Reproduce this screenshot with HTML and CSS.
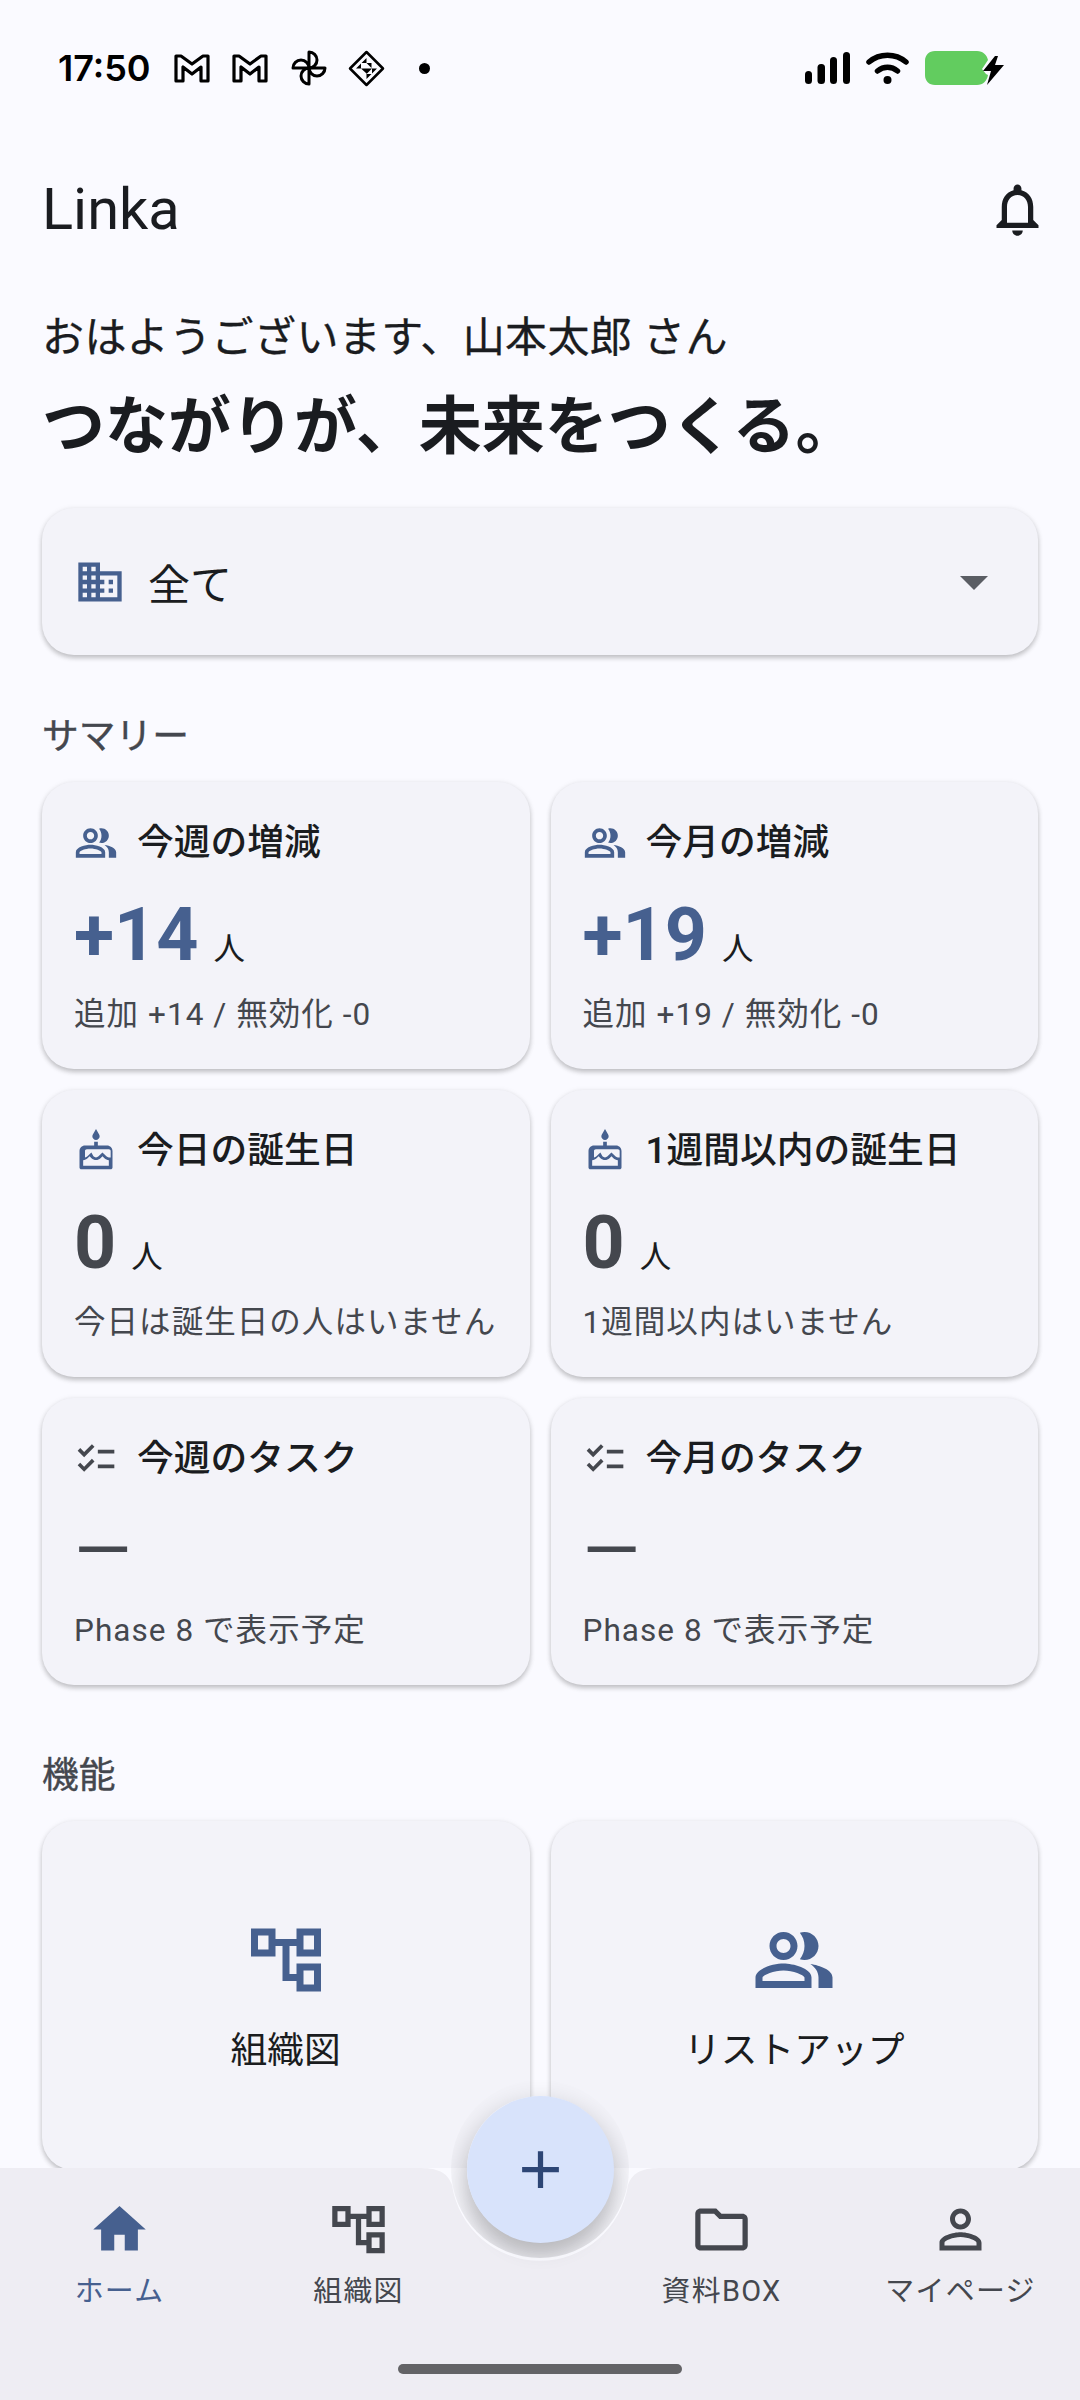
FILE: index.html
```html
<!DOCTYPE html>
<html lang="ja">

<head>
    <meta charset="UTF-8">
    <title>Linka</title>
    <link rel="stylesheet" href="styles.css">
</head>

<body>
    <svg class="defs" width="0" height="0">
        <symbol id="ic-group" viewBox="0 0 24 24"><path d="M16.67 13.13C18.04 14.06 19 15.32 19 17v3h4v-3c0-2.18-3.57-3.47-6.33-3.87zM15 12c2.21 0 4-1.79 4-4s-1.79-4-4-4c-.47 0-.91.1-1.33.24C14.5 5.27 15 6.58 15 8s-.5 2.73-1.33 3.76c.42.14.86.24 1.33.24zM9 12c2.21 0 4-1.79 4-4s-1.79-4-4-4-4 1.79-4 4 1.79 4 4 4zm0-6c1.1 0 2 .9 2 2s-.9 2-2 2-2-.9-2-2 .9-2 2-2zM9 13c-2.67 0-8 1.34-8 4v3h16v-3c0-2.66-5.33-4-8-4zm6 5H3v-.99C3.2 16.29 6.3 15 9 15s5.8 1.29 6 2v1z"/></symbol>
        <symbol id="ic-cake" viewBox="0 0 24 24"><path d="M12 6c1.11 0 2-.9 2-2 0-.38-.1-.73-.29-1.03L12 0l-1.71 2.97c-.19.3-.29.65-.29 1.03 0 1.1.9 2 2 2zm6 3h-5V7h-2v2H6c-1.66 0-3 1.34-3 3v9c0 .55.45 1 1 1h16c.55 0 1-.45 1-1v-9c0-1.66-1.34-3-3-3zm1 11H5v-3c.9-.01 1.76-.37 2.4-1.01l1.09-1.07 1.07 1.07c1.31 1.31 3.59 1.3 4.89 0l1.08-1.07 1.07 1.07c.64.64 1.5 1 2.4 1.01v3zm0-4.5c-.51-.01-.99-.2-1.35-.57l-2.13-2.13-2.14 2.13c-.74.74-2.03.74-2.77 0L9.48 12.8l-2.14 2.13c-.35.36-.83.56-1.34.57V12c0-.55.45-1 1-1h12c.55 0 1 .45 1 1v3.5z"/></symbol>
        <symbol id="ic-check" viewBox="0 0 24 24"><path d="M22 7h-9v2h9V7zm0 8h-9v2h9v-2zM5.54 11 2 7.46l1.41-1.41 2.12 2.12 4.24-4.24 1.41 1.41L5.54 11zm0 8L2 15.46l1.41-1.41 2.12 2.12 4.24-4.24 1.41 1.41L5.54 19z"/></symbol>
        <symbol id="ic-tree" viewBox="0 0 24 24"><path d="M22 11V3h-7v3H9V3H2v8h7V8h2v10h4v3h7v-8h-7v3h-2V8h2v3h7zM7 9H4V5h3v4zm10 6h3v4h-3v-4zm0-10h3v4h-3V5z"/></symbol>
        <symbol id="ic-mail" viewBox="0 0 36 29"><path d="M2 2h5l11 8 11-8h5v25h-7V13l-9 7-9-7v14H2z" fill="none" stroke="#000" stroke-width="3.200" stroke-linejoin="round"/></symbol>
    </svg>

    <div class="page">
        <!-- 상태바 -->
        <div class="statusbar">
            <span class="time">17:50</span>
            <svg class="st-mail" width="36" height="29"><use href="#ic-mail"/></svg>
            <svg class="st-mail" width="36" height="29"><use href="#ic-mail"/></svg>
            <svg class="st-wheel" width="36" height="36" viewBox="0 0 36 36" fill="none" stroke="#000" stroke-width="3" stroke-linejoin="round">
                <path d="M18 18V2a8 8 0 0 1 0 16z"/>
                <path d="M18 18h16a8 8 0 0 1-16 0z"/>
                <path d="M18 18v16a8 8 0 0 1 0-16z"/>
                <path d="M18 18H2a8 8 0 0 1 16 0z"/>
            </svg>
            <svg class="st-diamond" width="37" height="37" viewBox="0 0 37 37">
                <path d="M18.5 2 35 18.5 18.5 35 2 18.5z" fill="none" stroke="#000" stroke-width="2.5" stroke-linejoin="round"/>
                <path d="M18.5 8v5h-5zM18.5 13h5v5zM13 18.5h5.500v5zM18.500 18.500h5.500l-5.500 5.500zM24 18.500h5l-5 5zM18.500 24h5l-5 5zM8 18.500l5-5v5z"/>
            </svg>
            <span class="st-dot"></span>
            <div class="st-right">
                <svg width="45" height="32" viewBox="0 0 45 32">
                    <rect x="0" y="19" width="7" height="13" rx="3.500"/>
                    <rect x="12.500" y="12" width="7.500" height="20" rx="3.500"/>
                    <rect x="25" y="5" width="7" height="27" rx="3.500"/>
                    <rect x="38" y="0" width="7" height="32" rx="3.500"/>
                </svg>
                <svg class="st-wifi" width="43" height="32" viewBox="0 0 43 32" fill="none" stroke="#000" stroke-width="5.500" stroke-linecap="round">
                    <path d="M3 10C13.500 1 29.500 1 40 10"/>
                    <path d="M11.500 19C17.500 14 25.500 14 31.500 19"/>
                    <circle cx="21.500" cy="28" r="4" fill="#000" stroke="none"/>
                </svg>
                <svg class="st-batt" width="80" height="34" viewBox="0 0 80 34">
                    <path d="M10 0h42c6 0 10 4 11 9l-6 9 4 5 2 1c-1 6-5 10-11 10H10C4 34 0 30 0 24V10C0 4 4 0 10 0z" fill="#62cc5f"/>
                    <path d="M70 5 58 20h8l-4 14 17-20h-9l3-9z"/>
                </svg>
            </div>
        </div>

        <!-- 앱바 -->
        <header class="appbar">
            <span class="app-title">Linka</span>
            <svg class="ic-bell" viewBox="0 0 24 24"><path d="M12 22c1.100 0 2-.9 2-2h-4c0 1.100.9 2 2 2zm6-6v-5c0-3.070-1.630-5.640-4.500-6.320V4c0-.83-.67-1.500-1.500-1.500s-1.500.67-1.500 1.500v.68C7.640 5.360 6 7.920 6 11v5l-2 2v1h16v-1l-2-2zm-2 1H8v-6c0-2.480 1.510-4.500 4-4.500s4 2.020 4 4.500v6z"/></svg>
        </header>

        <main class="content">
            <p class="greet">おはようございます、山本太郎 さん</p>
            <h1 class="headline">つながりが、未来をつくる。</h1>

            <div class="card select">
                <svg class="ic-domain" viewBox="0 0 24 24"><path d="M12 7V3H2v18h20V7H12zM6 19H4v-2h2v2zm0-4H4v-2h2v2zm0-4H4V9h2v2zm0-4H4V5h2v2zm4 12H8v-2h2v2zm0-4H8v-2h2v2zm0-4H8V9h2v2zm0-4H8V5h2v2zm10 12h-8v-2h2v-2h-2v-2h2v-2h-2V9h8v10zm-2-8h-2v2h2v-2zm0 4h-2v2h2v-2z"/></svg>
                <span class="select-text">全て</span>
                <span class="caret"></span>
            </div>

            <h2 class="sec-title">サマリー</h2>
            <div class="grid">
                <div class="card stat">
                    <div class="stat-head"><svg class="ic-sm blue"><use href="#ic-group"/></svg>今週の増減</div>
                    <div class="stat-num blue-text"><b>+14</b><span>人</span></div>
                    <div class="stat-sub">追加 +14 / 無効化 -0</div>
                </div>
                <div class="card stat">
                    <div class="stat-head"><svg class="ic-sm blue"><use href="#ic-group"/></svg>今月の増減</div>
                    <div class="stat-num blue-text"><b>+19</b><span>人</span></div>
                    <div class="stat-sub">追加 +19 / 無効化 -0</div>
                </div>
                <div class="card stat">
                    <div class="stat-head"><svg class="ic-sm blue"><use href="#ic-cake"/></svg>今日の誕生日</div>
                    <div class="stat-num"><b>0</b><span>人</span></div>
                    <div class="stat-sub">今日は誕生日の人はいません</div>
                </div>
                <div class="card stat">
                    <div class="stat-head"><svg class="ic-sm blue"><use href="#ic-cake"/></svg>1週間以内の誕生日</div>
                    <div class="stat-num"><b>0</b><span>人</span></div>
                    <div class="stat-sub">1週間以内はいません</div>
                </div>
                <div class="card stat">
                    <div class="stat-head"><svg class="ic-sm grey"><use href="#ic-check"/></svg>今週のタスク</div>
                    <div class="stat-num"><i>—</i></div>
                    <div class="stat-sub">Phase 8 で表示予定</div>
                </div>
                <div class="card stat">
                    <div class="stat-head"><svg class="ic-sm grey"><use href="#ic-check"/></svg>今月のタスク</div>
                    <div class="stat-num"><i>—</i></div>
                    <div class="stat-sub">Phase 8 で表示予定</div>
                </div>
            </div>

            <h2 class="sec-title sec-func">機能</h2>
            <div class="grid">
                <div class="card feature">
                    <svg class="ic-lg blue"><use href="#ic-tree"/></svg>
                    <span>組織図</span>
                </div>
                <div class="card feature">
                    <svg class="ic-lg blue"><use href="#ic-group"/></svg>
                    <span>リストアップ</span>
                </div>
            </div>
        </main>

        <!-- 하단 내비 -->
        <nav class="bottom">
            <svg class="bottom-bg" viewBox="0 0 1080 232" preserveAspectRatio="none"><path d="M0 0H418C436 0 447 3 452 17A89 89 0 0 0 628 17C633 3 644 0 662 0H1080V232H0z"/></svg>
            <div class="nav-row">
                <a class="nav-item active">
                    <svg viewBox="0 0 24 24"><path d="M10 20v-6h4v6h5v-8h3L12 3 2 12h3v8z"/></svg>
                    <span>ホーム</span>
                </a>
                <a class="nav-item">
                    <svg><use href="#ic-tree"/></svg>
                    <span>組織図</span>
                </a>
                <div class="nav-gap"></div>
                <a class="nav-item">
                    <svg viewBox="0 0 24 24"><path d="M9.170 6l2 2H20v10H4V6h5.170M10 4H4c-1.100 0-1.990.9-1.990 2L2 18c0 1.100.9 2 2 2h16c1.100 0 2-.9 2-2V8c0-1.100-.9-2-2-2h-8l-2-2z"/></svg>
                    <span>資料BOX</span>
                </a>
                <a class="nav-item">
                    <svg viewBox="0 0 24 24"><path d="M12 5.900c1.160 0 2.100.94 2.100 2.100s-.94 2.100-2.100 2.100S9.900 9.160 9.900 8s.94-2.100 2.100-2.100m0 9c2.970 0 6.100 1.460 6.100 2.100v1.100H5.900V17c0-.64 3.130-2.100 6.100-2.100M12 4C9.790 4 8 5.790 8 8s1.790 4 4 4 4-1.790 4-4-1.790-4-4-4zm0 9c-2.670 0-8 1.340-8 4v3h16v-3c0-2.660-5.330-4-8-4z"/></svg>
                    <span>マイページ</span>
                </a>
            </div>
            <div class="home-bar"></div>
        </nav>

        <div class="fab-well"><div class="fab-shadow"></div></div>
        <button class="fab">
            <svg viewBox="0 0 24 24"><path d="M19 13h-6v6h-2v-6H5v-2h6V5h2v6h6v2z"/></svg>
        </button>
    </div>
</body>

</html>
```

FILE: styles.css
```css
* {
    box-sizing: border-box;
}

body {
    margin: 0;
    background: #fafaff;
    color: #1a1c20;
    font-family: Roboto, "Noto Sans CJK JP", sans-serif;
}

.defs {
    position: absolute;
}

.page {
    position: relative;
    width: 1080px;
    height: 2400px;
    overflow: hidden;
}

/* 상태바 */
.statusbar {
    display: flex;
    align-items: center;
    height: 136px;
    padding: 0 75px 0 58px;
    color: #000;
}

.time {
    width: 92px;
    font-family: Inter, sans-serif;
    font-size: 36px;
    font-weight: 600;
    white-space: nowrap;
}

.st-mail {
    margin-left: 24px;
}

.st-mail + .st-mail {
    margin-left: 22px;
}

.st-wheel {
    margin-left: 23px;
}

.st-diamond {
    margin-left: 21px;
}

.st-dot {
    width: 11px;
    height: 11px;
    margin-left: 34px;
    border-radius: 50%;
    background: #000;
}

.st-right {
    display: flex;
    align-items: center;
    margin-left: auto;
}

.st-wifi {
    margin-left: 16px;
}

.st-batt {
    margin-left: 16px;
}

/* 앱바 */
.appbar {
    display: flex;
    align-items: center;
    justify-content: space-between;
    height: 146px;
    padding: 0 31px 0 42px;
}

.app-title {
    font-size: 57.750px;
}

.ic-bell {
    width: 63px;
    height: 63px;
    fill: #1a1c20;
}

/* 본문 - 내비 위쪽에서 잘림 */
.content {
    height: 1886px;
    padding: 28px 42px 0 42px;
    overflow: hidden;
}

.greet {
    margin: 0;
    font-size: 42px;
    line-height: 56px;
    letter-spacing: .400px;
    -webkit-text-stroke: .3px;
}

.headline {
    margin: 19px 0 0;
    font-size: 63px;
    line-height: 84px;
    font-weight: 700;
}

.card {
    border-radius: 32px;
    background: #f3f3f9;
    box-shadow: 0 3px 5px rgba(0, 0, 0, .2), 0 1px 6px rgba(0, 0, 0, .08);
}

.select {
    display: flex;
    align-items: center;
    height: 147px;
    margin-top: 39px;
    padding: 0 50px 0 32px;
}

.ic-domain {
    width: 52px;
    height: 52px;
    fill: #46608f;
}

.select-text {
    margin-left: 22px;
    font-size: 42px;
}

.caret {
    margin-left: auto;
    margin-top: 2px;
    border-top: 14px solid #5a5d64;
    border-left: 14px solid transparent;
    border-right: 14px solid transparent;
}

.sec-title {
    margin: 56px 0 0;
    font-size: 36.750px;
    line-height: 52px;
    font-weight: 400;
    color: #44474e;
    -webkit-text-stroke: .4px;
}

.sec-func {
    margin-top: 65px;
}

.grid {
    display: grid;
    grid-template-columns: 1fr 1fr;
    gap: 21px;
    margin-top: 19px;
}

/* 요약 카드 */
.stat {
    display: flex;
    flex-direction: column;
    height: 287px;
    padding: 35px 20px 0 32px;
}

.stat-head {
    display: flex;
    align-items: center;
    font-size: 36.750px;
    line-height: 52px;
    font-weight: 500;
    white-space: nowrap;
}

.ic-sm {
    width: 44px;
    height: 44px;
    margin-right: 19px;
}

.blue {
    fill: #46608f;
}

.grey {
    fill: #44474e;
}

.stat-num {
    display: flex;
    align-items: baseline;
    height: 92px;
    margin-top: 20px;
    color: #44474e;
    font-size: 73.500px;
    line-height: 92px;
}

.stat-num b {
    font-weight: 700;
}

.stat-num i {
    font-style: normal;
    font-weight: 400;
}

.stat-num span {
    margin-left: 15px;
    font-size: 31.500px;
    color: #1a1c20;
}

.blue-text {
    color: #46608f;
}

.stat-sub {
    margin-top: 12px;
    font-size: 31.500px;
    line-height: 44px;
    letter-spacing: 1.050px;
    color: #44474e;
    white-space: nowrap;
}

/* 기능 카드 */
.feature {
    display: flex;
    flex-direction: column;
    align-items: center;
    height: 349px;
    padding-top: 97px;
    font-size: 36.750px;
}

.ic-lg {
    width: 84px;
    height: 84px;
}

.feature span {
    margin-top: 23px;
    line-height: 52px;
}

/* 하단 내비 */
.bottom {
    position: absolute;
    left: 0;
    bottom: 0;
    width: 1080px;
    height: 232px;
}

.bottom-bg {
    position: absolute;
    inset: 0;
    width: 100%;
    height: 100%;
    fill: #eeedf3;
}

.nav-row {
    position: relative;
    display: flex;
    padding-top: 30px;
}

.nav-item {
    display: flex;
    flex-direction: column;
    align-items: center;
    width: 239px;
    color: #44474e;
    fill: #44474e;
}

.nav-item svg {
    width: 63px;
    height: 63px;
}

.nav-item span {
    margin-top: 10px;
    font-size: 28.900px;
    line-height: 40px;
    letter-spacing: 1.300px;
    white-space: nowrap;
}

.nav-item.active {
    color: #46608f;
    fill: #46608f;
}

.nav-gap {
    width: 124px;
}

.home-bar {
    position: absolute;
    left: 398px;
    bottom: 26px;
    width: 284px;
    height: 10px;
    border-radius: 5px;
    background: #636366;
}

/* 플로팅 버튼 */
.fab-well {
    position: absolute;
    left: 451px;
    top: 2080px;
    width: 178px;
    height: 178px;
    border-radius: 50%;
    overflow: hidden;
}

.fab-shadow {
    width: 146px;
    height: 146px;
    margin: 16px;
    border-radius: 50%;
    box-shadow: 0 14px 30px 2px rgba(0, 0, 0, .25);
}

.fab {
    position: absolute;
    left: 467px;
    top: 2096px;
    display: flex;
    align-items: center;
    justify-content: center;
    width: 147px;
    height: 147px;
    padding: 0;
    border: 0;
    border-radius: 50%;
    background: #d8e3fb;
    box-shadow: 0 18px 18px -4px rgba(0, 0, 0, .05);
}

.fab svg {
    width: 63px;
    height: 63px;
    fill: #2d4675;
}
```
